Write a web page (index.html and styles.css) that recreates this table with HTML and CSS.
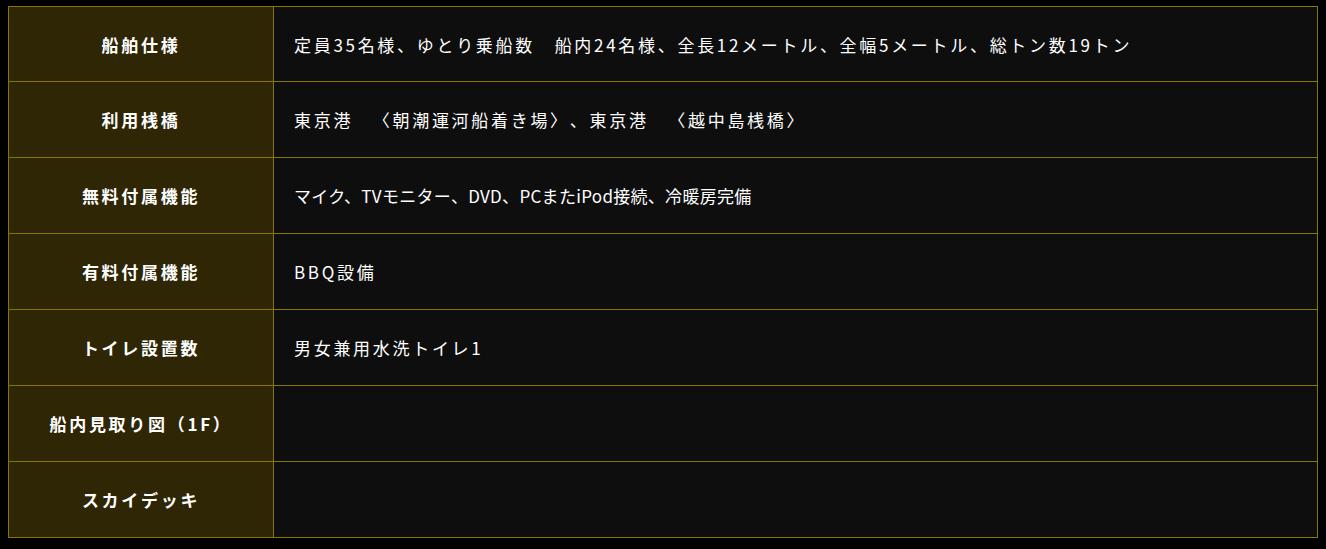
FILE: index.html
```html
<!DOCTYPE html>
<html lang="ja">
<head>
  <meta charset="UTF-8" />
  <meta name="viewport" content="width=device-width, initial-scale=1.0"/>
  <title>船舶仕様</title>
  <link rel="stylesheet" href="styles.css">
</head>
<body>
  <table class="spec-table">
    <tr>
      <th>船舶仕様</th>
      <td>定員35名様、ゆとり乗船数　船内24名様、全長12メートル、全幅5メートル、総トン数19トン</td>
    </tr>
    <tr>
      <th>利用桟橋</th>
      <td>東京港　〈朝潮運河船着き場〉、東京港　〈越中島桟橋〉</td>
    </tr>
    <tr>
      <th>無料付属機能</th>
      <td class="tight">マイク、TVモニター、DVD、PCまたiPod接続、冷暖房完備</td>
    </tr>
    <tr>
      <th>有料付属機能</th>
      <td>BBQ設備</td>
    </tr>
    <tr>
      <th>トイレ設置数</th>
      <td>男女兼用水洗トイレ1</td>
    </tr>
    <tr>
      <th>船内見取り図（1F）</th>
      <td></td>
    </tr>
    <tr>
      <th>スカイデッキ</th>
      <td></td>
    </tr>
  </table>
</body>
</html>
```

FILE: styles.css
```css
body {
  background: #000;
  color: #fff;
  font-family: "Noto Sans CJK JP", "Noto Sans", sans-serif;
  margin: 6px 8px;
}
.spec-table {
  width: 100%;
  border-collapse: collapse;
  font-size: 17px;
  letter-spacing: 2.7px;
  text-spacing-trim: space-all;
}
.spec-table th,
.spec-table td {
  border: 1px solid #8a7400;
  height: 75px;
  padding: 0 20px;
  vertical-align: middle;
}
.spec-table tr:first-child th,
.spec-table tr:first-child td {
  height: 74px;
}
.spec-table th {
  width: 224px;
  background: #2e2604;
  font-weight: bold;
  text-align: center;
}
.spec-table td {
  background: #0e0e0e;
  text-align: left;
}
.spec-table td.tight {
  letter-spacing: 0.3px;
}
```
